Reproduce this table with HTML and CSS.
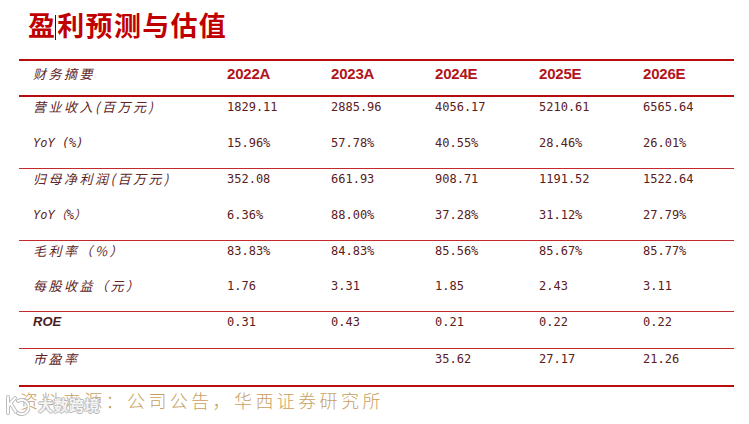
FILE: index.html
```html
<!DOCTYPE html>
<html lang="zh-CN">
<head>
<meta charset="utf-8">
<link rel="stylesheet" href="styles.css">
</head>
<body>
<div class="page">
  <h1 class="title">盈<span class="caret"></span>利预测与估值</h1>
  <div class="table">
    <div class="row head">
      <div class="label">财务摘要</div>
      <div class="year">2022A</div>
      <div class="year">2023A</div>
      <div class="year">2024E</div>
      <div class="year">2025E</div>
      <div class="year">2026E</div>
    </div>
    <div class="group first">
      <div class="row tall">
        <div class="label">营业收入(百万元)</div>
        <div class="num">1829.11</div><div class="num">2885.96</div><div class="num">4056.17</div><div class="num">5210.61</div><div class="num">6565.64</div>
      </div>
      <div class="row">
        <div class="label latin">YoY (%)</div>
        <div class="num">15.96%</div><div class="num">57.78%</div><div class="num">40.55%</div><div class="num">28.46%</div><div class="num">26.01%</div>
      </div>
    </div>
    <div class="group">
      <div class="row tall">
        <div class="label">归母净利润(百万元)</div>
        <div class="num">352.08</div><div class="num">661.93</div><div class="num">908.71</div><div class="num">1191.52</div><div class="num">1522.64</div>
      </div>
      <div class="row">
        <div class="label latin">YoY（%）</div>
        <div class="num">6.36%</div><div class="num">88.00%</div><div class="num">37.28%</div><div class="num">31.12%</div><div class="num">27.79%</div>
      </div>
    </div>
    <div class="group">
      <div class="row">
        <div class="label">毛利率（%）</div>
        <div class="num">83.83%</div><div class="num">84.83%</div><div class="num">85.56%</div><div class="num">85.67%</div><div class="num">85.77%</div>
      </div>
      <div class="row">
        <div class="label">每股收益（元）</div>
        <div class="num">1.76</div><div class="num">3.31</div><div class="num">1.85</div><div class="num">2.43</div><div class="num">3.11</div>
      </div>
    </div>
    <div class="group">
      <div class="row tall">
        <div class="label roe">ROE</div>
        <div class="num">0.31</div><div class="num">0.43</div><div class="num">0.21</div><div class="num">0.22</div><div class="num">0.22</div>
      </div>
    </div>
    <div class="group">
      <div class="row tall">
        <div class="label">市盈率</div>
        <div class="num"></div><div class="num"></div><div class="num">35.62</div><div class="num">27.17</div><div class="num">21.26</div>
      </div>
    </div>
  </div>
  <div class="source">
    <span>资料来源：公司公告，华西证券研究所</span>
    <div class="watermark">
      <svg class="wm-logo" width="26" height="22" viewBox="0 0 26 22">
        <path d="M4 3 L4 19 M4 12 L11 4 M7 10 L12 18" fill="none" stroke="#bdbdbd" stroke-width="4" stroke-linecap="round"/>
        <path d="M4 3 L4 19 M4 12 L11 4 M7 10 L12 18" fill="none" stroke="#ffffff" stroke-width="2" stroke-linecap="round"/>
        <path d="M14 7 A7 7 0 1 1 14 19" fill="none" stroke="#bdbdbd" stroke-width="4" stroke-linecap="round"/>
        <path d="M14 7 A7 7 0 1 1 14 19" fill="none" stroke="#ffffff" stroke-width="2" stroke-linecap="round"/>
      </svg>
      <span class="wm-text">大数跨境</span>
    </div>
  </div>
</div>
</body>
</html>
```

FILE: styles.css
```css
html, body {
  margin: 0;
  padding: 0;
  background: #ffffff;
}

.page {
  width: 749px;
  height: 424px;
  overflow: hidden;
  position: relative;
}

.title {
  margin: 0;
  box-sizing: border-box;
  height: 59px;
  padding: 8px 0 0 28px;
  font-family: "Noto Sans CJK SC", sans-serif;
  font-weight: 700;
  font-size: 27px;
  line-height: 34px;
  letter-spacing: 1.3px;
  color: #c00000;
}

.caret {
  display: inline-block;
  width: 1px;
  height: 25px;
  background: #1a1a1a;
  vertical-align: -4px;
  margin: 0 1px 0 -1px;
}

.table {
  margin-left: 19px;
  width: 715px;
  border-top: 2px solid #b70d0d;
  border-bottom: 2px solid #b70d0d;
}

.row {
  display: grid;
  grid-template-columns: 208px 104px 104px 104px 104px 91px;
  box-sizing: border-box;
  height: 35px;
  padding-top: 2px;
  line-height: 16px;
}

.row.tall {
  height: 36px;
}

.row.head {
  height: 36px;
  padding-top: 4px;
  line-height: 18px;
  border-bottom: 2px solid #b70d0d;
}

.group {
  border-top: 1px solid #c4292b;
}

.group.first {
  border-top: none;
}

.label {
  padding-left: 14px;
  font-family: "Noto Sans CJK SC", sans-serif;
  font-style: italic;
  font-size: 13px;
  letter-spacing: 2.5px;
  color: #5e2525;
}

.label.latin {
  font-family: "DejaVu Sans Mono", "Noto Sans CJK SC", monospace;
  font-size: 12px;
  letter-spacing: 0;
}

.label.roe {
  font-family: "Liberation Sans", sans-serif;
  font-weight: 700;
  font-size: 13px;
  letter-spacing: 0;
  color: #4a1c1c;
}

.year {
  font-family: "Liberation Sans", sans-serif;
  font-weight: 700;
  font-size: 15px;
  letter-spacing: -0.2px;
  color: #b3141b;
}

.num {
  font-family: "DejaVu Sans Mono", monospace;
  font-size: 12px;
  color: #5a2020;
}

.source {
  position: relative;
  padding: 1px 0 0 20px;
  font-family: "Noto Sans CJK SC", sans-serif;
  font-weight: 300;
  font-size: 18px;
  line-height: 24px;
  letter-spacing: 3.4px;
  color: #c89f60;
}

.watermark {
  position: absolute;
  left: 4px;
  top: 6px;
  display: flex;
  align-items: center;
  gap: 8px;
}

.wm-text {
  font-family: "Noto Sans CJK SC", sans-serif;
  font-weight: 700;
  font-size: 15px;
  letter-spacing: 0.5px;
  color: #f4f4f4;
  text-shadow: -1px 0 #b8b8b8, 1px 0 #b8b8b8, 0 -1px #b8b8b8, 0 1px #b8b8b8;
}
```
